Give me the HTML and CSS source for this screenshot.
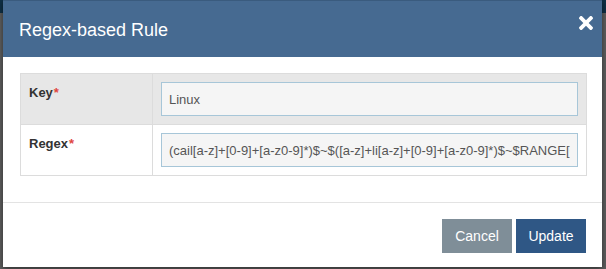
FILE: index.html
```html
<!DOCTYPE html>
<html>
<head>
<meta charset="utf-8">
<link rel="stylesheet" href="styles.css">
</head>
<body>
<div class="backdrop">
  <div class="bg-topbar"></div>
</div>
<div class="modal">
  <div class="modal-header">
    <h4 class="modal-title">Regex-based Rule</h4>
    <button class="close" aria-label="Close">
      <svg width="14" height="14" viewBox="0 80 352 352"><path fill="#fff" d="M242.72 256l100.07-100.07c12.28-12.280 12.28-32.19 0-44.48l-22.24-22.24c-12.28-12.28-32.19-12.28-44.48 0L176 189.28 75.930 89.21c-12.28-12.28-32.19-12.28-44.480 0L9.21 111.45c-12.28 12.28-12.28 32.19 0 44.48L109.28 256 9.21 356.07c-12.28 12.28-12.28 32.19 0 44.48l22.24 22.24c12.28 12.28 32.2 12.28 44.48 0L176 322.72l100.07 100.07c12.28 12.28 32.2 12.28 44.48 0l22.24-22.24c12.28-12.28 12.28-32.19 0-44.48L242.72 256z"/></svg>
    </button>
  </div>
  <div class="modal-body">
    <table class="rule-table">
      <tr class="row-shaded">
        <th>Key<span class="req">*</span></th>
        <td><input class="field" type="text" value="Linux"></td>
      </tr>
      <tr>
        <th>Regex<span class="req">*</span></th>
        <td><input class="field" type="text" value="(cail[a-z]+[0-9]+[a-z0-9]*)$~$([a-z]+li[a-z]+[0-9]+[a-z0-9]*)$~$RANGE[0-9]+$"></td>
      </tr>
    </table>
  </div>
  <div class="modal-footer">
    <button class="btn btn-cancel">Cancel</button>
    <button class="btn btn-update">Update</button>
  </div>
</div>
</body>
</html>
```
FILE: styles.css
```css
html, body {
  margin: 0;
  padding: 0;
  width: 606px;
  height: 269px;
  overflow: hidden;
  font-family: "Liberation Sans", Arial, sans-serif;
}
.backdrop {
  width: 606px;
  height: 269px;
  background: #5e5e5e;
}
.bg-topbar {
  height: 13px;
  background: #0f3046;
}
.modal {
  position: absolute;
  left: 3px;
  top: 0;
  width: 599px;
  height: 267px;
  background: #fff;
  box-shadow: 0 2px 6px rgba(0,0,0,0.5);
  display: flex;
  flex-direction: column;
}
.modal-header {
  height: 56px;
  border-top: 1px solid #3a5b7e;
  background: #466a91;
  display: flex;
  align-items: center;
  justify-content: space-between;
  padding: 0 9px 0 16px;
}
.modal-title {
  margin: 0;
  font-size: 18px;
  font-weight: normal;
  color: #fff;
  line-height: 20px;
  padding-top: 2px;
}
.close {
  background: none;
  border: 0;
  padding: 0;
  margin-top: -13px;
  display: flex;
}
.modal-body {
  padding: 16px 16px 26px 17px;
  border-bottom: 1px solid #e3e3e3;
}
.rule-table {
  width: 567px;
  border-collapse: collapse;
  border: 1px solid #dcdcdc;
}
.rule-table th,
.rule-table td {
  border: 1px solid #dcdcdc;
  padding: 8px;
  vertical-align: top;
}
.rule-table th {
  width: 115px;
  text-align: left;
  font-size: 13px;
  font-weight: bold;
  color: #333;
  line-height: 20px;
  padding-top: 9px;
  padding-left: 8px;
}
.row-shaded {
  background: #e7e7e7;
}
.req {
  color: #e0463f;
  margin-left: 1px;
}
.field {
  display: block;
  box-sizing: border-box;
  width: 417px;
  height: 34px;
  margin: 0;
  padding: 0 7px;
  border: 1px solid #a7c6d8;
  background: #f5f5f5;
  font-family: "Liberation Sans", Arial, sans-serif;
  font-size: 13px;
  color: #555;
  outline: none;
}
.modal-footer {
  flex: 1;
  display: flex;
  justify-content: flex-end;
  align-items: flex-start;
  gap: 4px;
  padding: 16px 16px 0 0;
}
.btn {
  height: 34px;
  width: 70px;
  border: 0;
  padding: 0;
  font-family: "Liberation Sans", Arial, sans-serif;
  font-size: 14px;
  color: #fff;
}
.btn-cancel {
  background: #7f8e98;
}
.btn-update {
  background: #2f5785;
}
```
